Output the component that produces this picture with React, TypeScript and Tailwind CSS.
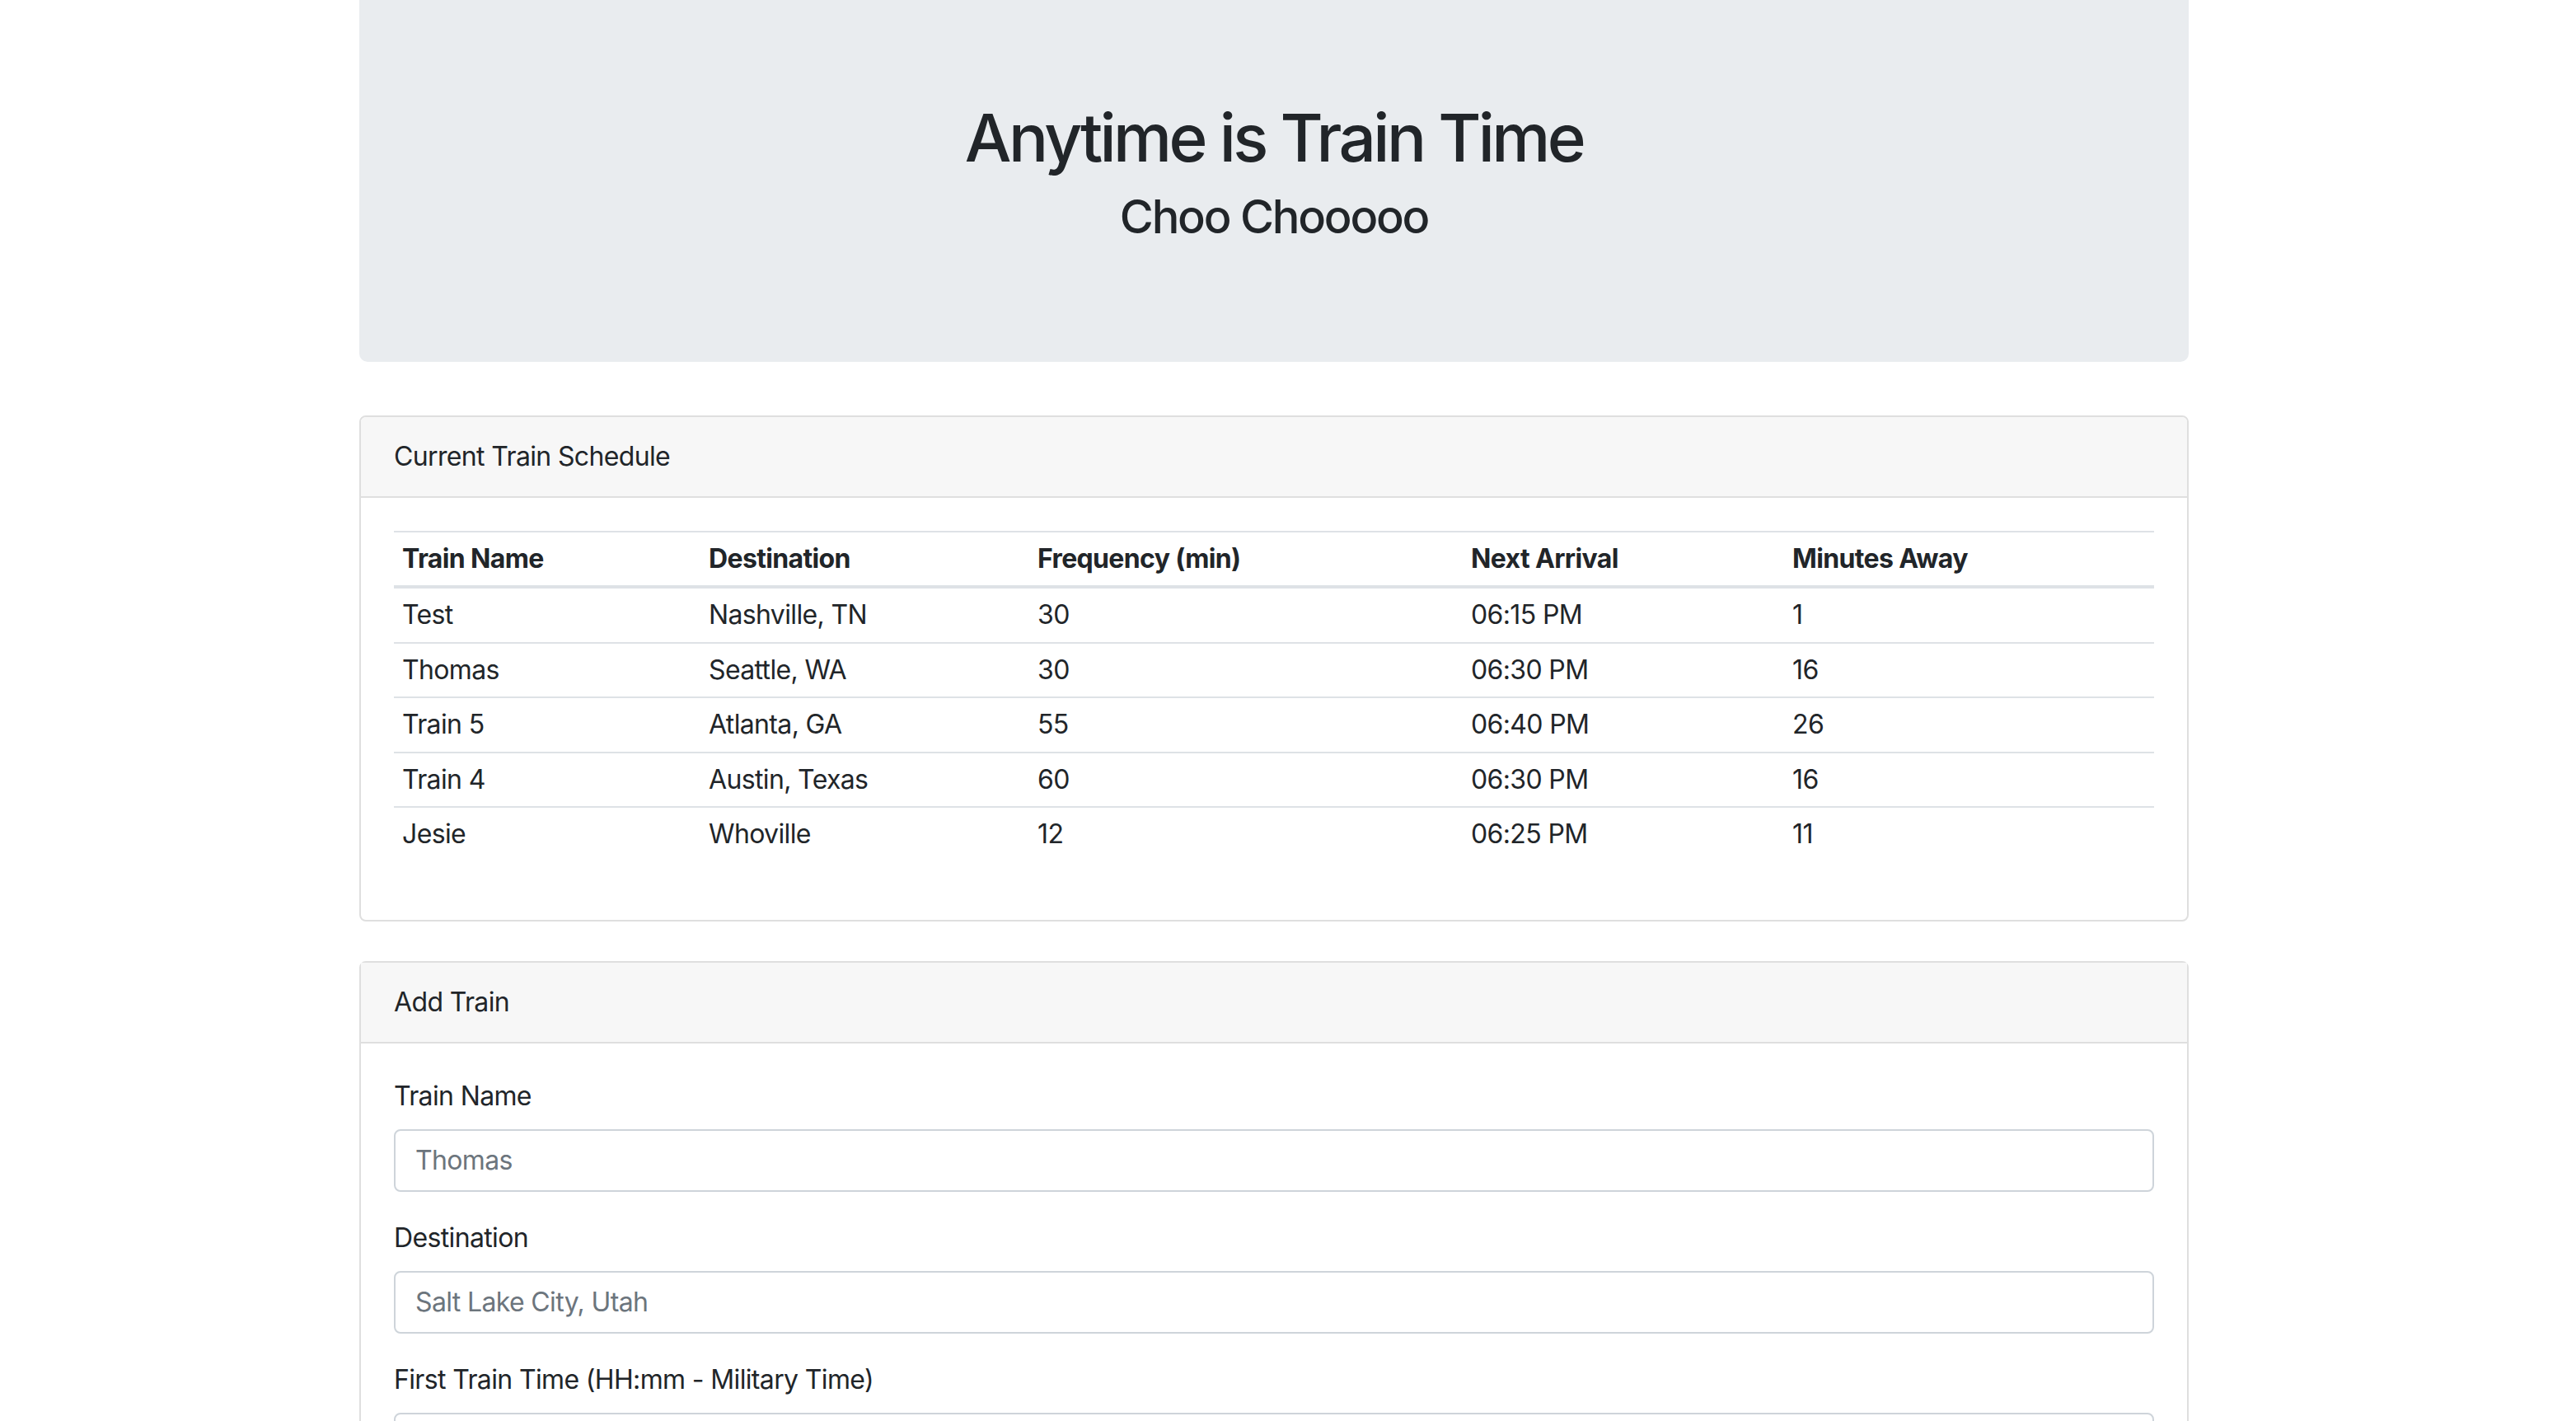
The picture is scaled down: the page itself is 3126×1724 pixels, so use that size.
const trains = [
  { name: 'Test', dest: 'Nashville, TN', freq: '30', next: '06:15 PM', away: '1' },
  { name: 'Thomas', dest: 'Seattle, WA', freq: '30', next: '06:30 PM', away: '16' },
  { name: 'Train 5', dest: 'Atlanta, GA', freq: '55', next: '06:40 PM', away: '26' },
  { name: 'Train 4', dest: 'Austin, Texas', freq: '60', next: '06:30 PM', away: '16' },
  { name: 'Jesie', dest: 'Whoville', freq: '12', next: '06:25 PM', away: '11' },
];

const fields = [
  { label: 'Train Name', placeholder: 'Thomas' },
  { label: 'Destination', placeholder: 'Salt Lake City, Utah' },
  { label: 'First Train Time (HH:mm - Military Time)', placeholder: '05:30' },
];

function CardHeader({ children }: { children: React.ReactNode }) {
  return (
    <div className="border-b-2 border-[#dfdfdf] bg-[#f7f7f7] px-[40px] py-[24px] leading-[48px]">
      {children}
    </div>
  );
}

export default function App() {
  return (
    <div className="min-h-screen bg-white font-['Inter','Liberation_Sans',sans-serif] text-[32px] tracking-[-0.02em] text-[#212529]">
      <div className="ml-[436px] w-[2220px]">
        <header className="h-[439px] rounded-b-[10px] bg-[#e9ecef] pt-[119px] text-center">
          <h1 className="text-[80px] font-medium leading-[96px] tracking-[-0.045em]">Anytime is Train Time</h1>
          <h3 className="mt-[15px] text-[56px] font-medium leading-[67px] tracking-[-0.04em]">Choo Chooooo</h3>
        </header>

        <section className="mt-[65px] overflow-hidden rounded-[8px] border-2 border-[#dfdfdf]">
          <CardHeader>Current Train Schedule</CardHeader>
          <div className="px-[40px] pb-[41px] pt-[40px]">
            <table className="mb-[30px] w-full table-fixed border-collapse text-left">
              <colgroup>
                <col className="w-[372px]" />
                <col className="w-[399px]" />
                <col className="w-[526px]" />
                <col className="w-[390px]" />
                <col />
              </colgroup>
              <thead>
                <tr className="border-t-2 border-b-4 border-[#dee2e6]">
                  {['Train Name', 'Destination', 'Frequency (min)', 'Next Arrival', 'Minutes Away'].map((h) => (
                    <th key={h} className="px-[10px] py-[8px] font-bold leading-[48px]">
                      {h}
                    </th>
                  ))}
                </tr>
              </thead>
              <tbody>
                {trains.map((t, i) => (
                  <tr key={i} className={i === 0 ? '' : 'border-t-2 border-[#dee2e6]'}>
                    {[t.name, t.dest, t.freq, t.next, t.away].map((v, j) => (
                      <td key={j} className="px-[10px] py-[8px] leading-[48.5px]">
                        {v}
                      </td>
                    ))}
                  </tr>
                ))}
              </tbody>
            </table>
          </div>
        </section>

        <section className="mt-[48px] rounded-[8px] border-2 border-[#dfdfdf]">
          <CardHeader>Add Train</CardHeader>
          <div className="px-[40px] pt-[40px]">
            {fields.map((f) => (
              <div key={f.label} className="mb-[32px]">
                <label className="mb-[16px] block leading-[48px]">{f.label}</label>
                <input
                  type="text"
                  placeholder={f.placeholder}
                  className="block h-[76px] w-full rounded-[8px] border-2 border-[#ced4da] bg-white px-[24px] text-[32px] tracking-[-0.02em] text-[#495057] placeholder:text-[#6c757d]"
                />
              </div>
            ))}
          </div>
        </section>
      </div>
    </div>
  );
}
